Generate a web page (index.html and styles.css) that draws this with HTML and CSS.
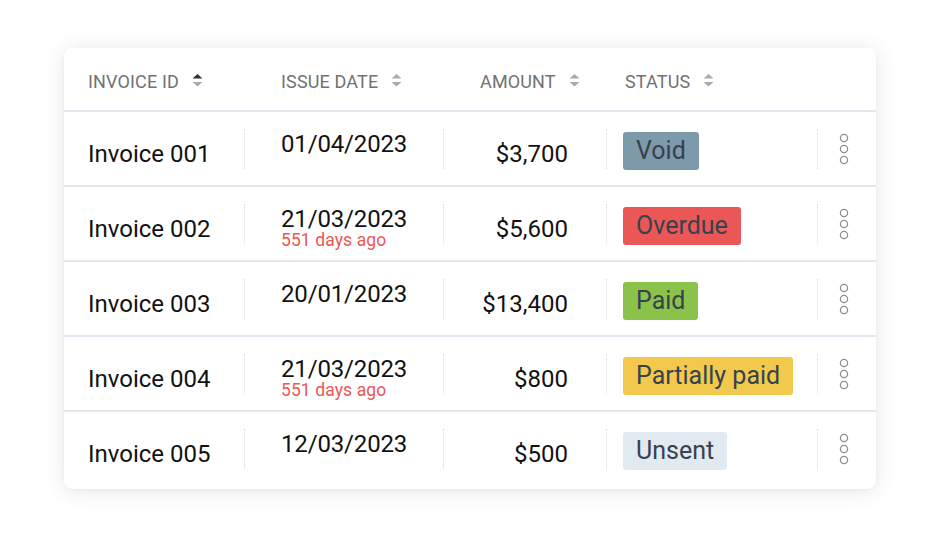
FILE: index.html
```html
<!DOCTYPE html>
<html lang="en">
<head>
<meta charset="utf-8">
<title>Invoices</title>
<link rel="stylesheet" href="styles.css">
</head>
<body>
<div class="card">
  <div class="head">
    <div class="hcell c1"><span>Invoice ID</span><svg class="sort" viewBox="0 0 11 13" width="11" height="13"><path class="up active" d="M5.5 0 L10.5 4.6 H0.5 Z"/><path class="down" d="M0.5 8 H10.5 L5.5 12.6 Z"/></svg></div>
    <div class="hcell c2"><span>Issue date</span><svg class="sort" viewBox="0 0 11 13" width="11" height="13"><path class="up" d="M5.5 0 L10.5 4.6 H0.5 Z"/><path class="down" d="M0.5 8 H10.5 L5.5 12.6 Z"/></svg></div>
    <div class="hcell c3"><span>Amount</span><svg class="sort" viewBox="0 0 11 13" width="11" height="13"><path class="up" d="M5.5 0 L10.5 4.6 H0.5 Z"/><path class="down" d="M0.5 8 H10.5 L5.5 12.6 Z"/></svg></div>
    <div class="hcell c4"><span>Status</span><svg class="sort" viewBox="0 0 11 13" width="11" height="13"><path class="up" d="M5.5 0 L10.5 4.6 H0.5 Z"/><path class="down" d="M0.5 8 H10.5 L5.5 12.6 Z"/></svg></div>
    <div class="hcell c5"></div>
  </div>

  <div class="row">
    <div class="cell id">Invoice 001</div>
    <div class="cell date sep"><div class="d">01/04/2023</div></div>
    <div class="cell amt sep">$3,700</div>
    <div class="cell status sep"><span class="badge void">Void</span></div>
    <div class="cell more sep"><svg viewBox="0 0 14 40" width="14" height="40"><circle cx="7" cy="9" r="3.6"/><circle cx="7" cy="20" r="3.6"/><circle cx="7" cy="31" r="3.6"/></svg></div>
  </div>

  <div class="row">
    <div class="cell id">Invoice 002</div>
    <div class="cell date sep"><div class="d">21/03/2023</div><div class="ago">551 days ago</div></div>
    <div class="cell amt sep">$5,600</div>
    <div class="cell status sep"><span class="badge overdue">Overdue</span></div>
    <div class="cell more sep"><svg viewBox="0 0 14 40" width="14" height="40"><circle cx="7" cy="9" r="3.6"/><circle cx="7" cy="20" r="3.6"/><circle cx="7" cy="31" r="3.6"/></svg></div>
  </div>

  <div class="row">
    <div class="cell id">Invoice 003</div>
    <div class="cell date sep"><div class="d">20/01/2023</div></div>
    <div class="cell amt sep">$13,400</div>
    <div class="cell status sep"><span class="badge paid">Paid</span></div>
    <div class="cell more sep"><svg viewBox="0 0 14 40" width="14" height="40"><circle cx="7" cy="9" r="3.6"/><circle cx="7" cy="20" r="3.6"/><circle cx="7" cy="31" r="3.6"/></svg></div>
  </div>

  <div class="row">
    <div class="cell id">Invoice 004</div>
    <div class="cell date sep"><div class="d">21/03/2023</div><div class="ago">551 days ago</div></div>
    <div class="cell amt sep">$800</div>
    <div class="cell status sep"><span class="badge partial">Partially paid</span></div>
    <div class="cell more sep"><svg viewBox="0 0 14 40" width="14" height="40"><circle cx="7" cy="9" r="3.6"/><circle cx="7" cy="20" r="3.6"/><circle cx="7" cy="31" r="3.6"/></svg></div>
  </div>

  <div class="row last">
    <div class="cell id">Invoice 005</div>
    <div class="cell date sep"><div class="d">12/03/2023</div></div>
    <div class="cell amt sep">$500</div>
    <div class="cell status sep"><span class="badge unsent">Unsent</span></div>
    <div class="cell more sep"><svg viewBox="0 0 14 40" width="14" height="40"><circle cx="7" cy="9" r="3.6"/><circle cx="7" cy="20" r="3.6"/><circle cx="7" cy="31" r="3.6"/></svg></div>
  </div>
</div>
</body>
</html>
```

FILE: styles.css
```css
* { box-sizing: border-box; }

html, body {
  margin: 0;
  padding: 0;
  background: #ffffff;
}

body {
  font-family: Roboto, "Liberation Sans", Arial, sans-serif;
  color: #121212;
  padding: 48px 64px;
}

.card {
  width: 812px;
  background: #ffffff;
  border-radius: 8px;
  box-shadow: 0 2px 22px rgba(0, 0, 0, 0.10), 0 1px 3px rgba(0, 0, 0, 0.04);
  padding-bottom: 2px;
}

.head,
.row {
  display: grid;
  grid-template-columns: 180px 199px 163px 211px 59px;
}

.head {
  height: 64px;
  border-bottom: 2px solid #e1e7ee;
}

.hcell {
  display: flex;
  align-items: center;
  padding-top: 5px;
  font-size: 18px;
  line-height: 20px;
  text-transform: uppercase;
  color: #727272;
  letter-spacing: 0.15px;
}

.hcell .sort {
  margin-left: 13px;
  margin-top: -2px;
}

.sort path { fill: #ababab; }
.sort path.active { fill: #333333; }

.hcell.c1 { padding-left: 24px; }
.hcell.c2 { padding-left: 37px; }
.hcell.c3 { padding-left: 37px; }
.hcell.c4 { padding-left: 19px; }

.row {
  height: 75px;
  border-bottom: 2px solid #e1e7ee;
}

.row.last { border-bottom: none; }

.cell {
  margin-top: 17px;
  height: 40px;
  font-size: 24px;
  line-height: 28px;
}

.cell.sep {
  border-left: 1px dotted #d9dcdf;
}

.cell.id {
  padding-left: 24px;
  padding-top: 11px;
}

.cell.date {
  padding-left: 36px;
  padding-top: 3px;
  line-height: 24px;
  letter-spacing: -0.15px;
}

.cell.date .ago {
  font-size: 17.5px;
  line-height: 18px;
  letter-spacing: 0.1px;
  color: #eb5757;
}

.cell.amt {
  text-align: right;
  padding-right: 38px;
  padding-top: 11px;
}

.cell.status {
  padding-left: 16px;
  padding-top: 3px;
}

.badge {
  display: inline-block;
  height: 38px;
  line-height: 38px;
  padding: 0 13px;
  border-radius: 3px;
  color: #37424d;
  font-size: 25px;
}

.badge.void { background: #7d9aab; }
.badge.overdue { background: #eb5757; }
.badge.paid { background: #8bc34a; }
.badge.partial { background: #f2c94c; }
.badge.unsent { background: #e1e9f1; }

.cell.more {
  padding-left: 19px;
}

.cell.more svg {
  display: block;
}

.cell.more circle {
  fill: none;
  stroke: #8f8f8f;
  stroke-width: 1.3;
}
```
